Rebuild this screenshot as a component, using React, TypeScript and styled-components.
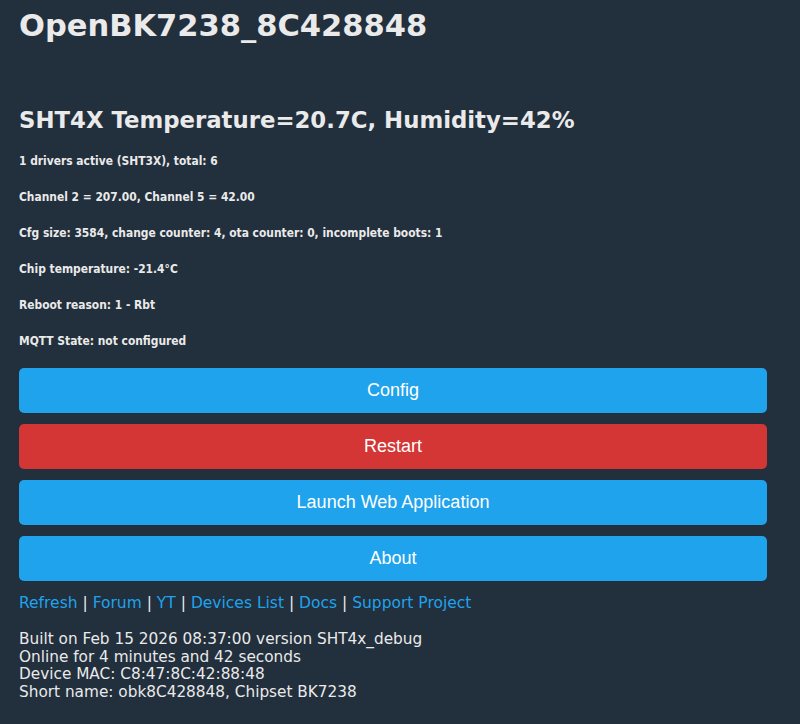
import styled, { createGlobalStyle } from "styled-components";

const GlobalStyle = createGlobalStyle`
  html, body {
    margin: 0;
    background: #222f3c;
  }
  body {
    font-family: "DejaVu Sans", Verdana, sans-serif;
    color: #eaeaea;
  }
`;

const Page = styled.main`
  padding: 4px 33px 20px 19px;
  min-height: 724px;
  box-sizing: border-box;
`;

const Title = styled.h1`
  margin: 0;
  font-size: 30.5px;
  line-height: 44px;
  font-weight: bold;
`;

const Sensor = styled.h3`
  margin: 54px 0 0;
  font-size: 22.8px;
  line-height: 36px;
  font-weight: bold;
`;

const InfoList = styled.div`
  display: flex;
  flex-direction: column;
  gap: 20px;
  margin-top: 15px;
`;

const Info = styled.h5`
  margin: 0;
  font-family: "DejaVu Sans Condensed", "DejaVu Sans", sans-serif;
  font-size: 11.9px;
  line-height: 16px;
  font-weight: bold;
`;

const Buttons = styled.div`
  display: flex;
  flex-direction: column;
  gap: 11px;
  margin-top: 19px;
`;

const Button = styled.button<{ $danger?: boolean }>`
  border: 0;
  border-radius: 5px;
  height: 45px;
  width: 100%;
  background: ${(p) => (p.$danger ? "#d43535" : "#1fa3ec")};
  color: #fff;
  font-family: "Liberation Sans", Arial, sans-serif;
  font-size: 18px;
  cursor: pointer;
`;

const Links = styled.div`
  margin-top: 12px;
  font-size: 15.5px;
  line-height: 20px;
  color: #eaeaea;

  a {
    color: #1fa3ec;
    text-decoration: none;
  }
`;

const Footer = styled.div`
  margin-top: 18px;
  font-size: 15.3px;
  line-height: 17.7px;
`;

const links = ["Refresh", "Forum", "YT", "Devices List", "Docs", "Support Project"];

export default function App() {
  return (
    <>
      <GlobalStyle />
      <Page>
        <Title>OpenBK7238_8C428848</Title>
        <Sensor>SHT4X Temperature=20.7C, Humidity=42%</Sensor>
        <InfoList>
          <Info>1 drivers active (SHT3X), total: 6</Info>
          <Info>Channel 2 = 207.00, Channel 5 = 42.00</Info>
          <Info>Cfg size: 3584, change counter: 4, ota counter: 0, incomplete boots: 1</Info>
          <Info>Chip temperature: -21.4°C</Info>
          <Info>Reboot reason: 1 - Rbt</Info>
          <Info>MQTT State: not configured</Info>
        </InfoList>
        <Buttons>
          <Button>Config</Button>
          <Button $danger>Restart</Button>
          <Button>Launch Web Application</Button>
          <Button>About</Button>
        </Buttons>
        <Links>
          {links.map((l, i) => (
            <span key={l}>
              {i > 0 && " | "}
              <a href="#">{l}</a>
            </span>
          ))}
        </Links>
        <Footer>
          Built on Feb 15 2026 08:37:00 version SHT4x_debug
          <br />
          Online for 4 minutes and 42 seconds
          <br />
          Device MAC: C8:47:8C:42:88:48
          <br />
          Short name: obk8C428848, Chipset BK7238
        </Footer>
      </Page>
    </>
  );
}
